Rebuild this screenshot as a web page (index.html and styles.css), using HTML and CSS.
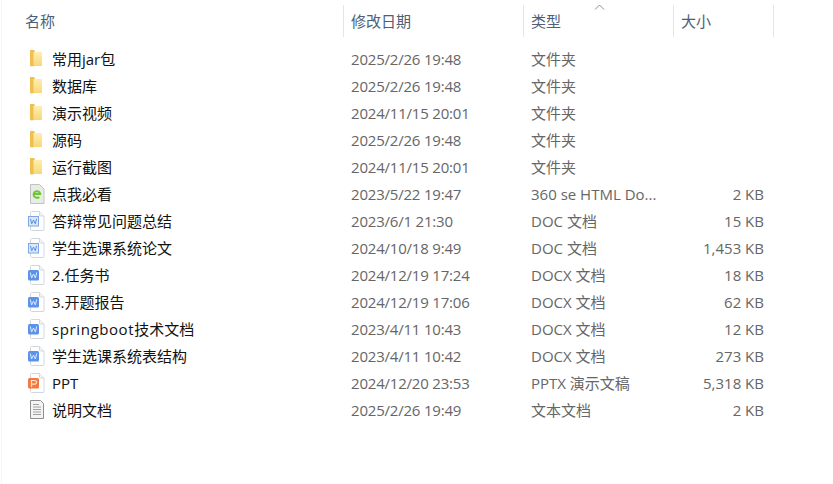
FILE: index.html
```html
<!DOCTYPE html>
<html lang="zh-CN">
<head>
  <meta charset="UTF-8">
  <title>文件列表</title>
  <link rel="stylesheet" href="styles.css">
</head>
<body>
  <svg class="defs" width="0" height="0">
    <defs>
      <linearGradient id="folder-fill" x1="0" y1="0" x2="0" y2="1">
        <stop offset="0" stop-color="#fdeeb0"/>
        <stop offset="1" stop-color="#f8d878"/>
      </linearGradient>
      <symbol id="folder" viewBox="0 0 18 20">
        <path d="M2 1h4l1 1.500v14.500l-4 0.500-1-1z" fill="#efc050"/>
        <path d="M5.500 3h8.500v14H5.500z" fill="url(#folder-fill)"/>
      </symbol>
      <symbol id="page" viewBox="0 0 18 20">
        <path d="M3.500 0.500h8l4.500 4.500v13.500a1 1 0 0 1-1 1h-11.500a1 1 0 0 1-1-1v-17a1 1 0 0 1 1-1z" fill="#fff" stroke="#d3d7dc"/>
        <path d="M11.500 0.500v3.500a1 1 0 0 0 1 1h3.500" fill="#f4f5f7" stroke="#d3d7dc"/>
      </symbol>
      <symbol id="doc-old" viewBox="0 0 18 20">
        <use href="#page" width="18" height="20"/>
        <rect x="0.500" y="5.500" width="10" height="9.500" fill="#dce8fa" stroke="#7aa6ea"/>
        <path d="M2.500 7.800l1.200 5 1.800-3.800 1.800 3.800 1.200-5" fill="none" stroke="#5a8fe0"/>
      </symbol>
      <symbol id="doc-new" viewBox="0 0 18 20">
        <use href="#page" width="18" height="20"/>
        <rect x="0" y="5" width="11" height="10.500" rx="1.500" fill="#5b93ea"/>
        <path d="M2.300 7.500l1.300 5.500 1.900-4 1.900 4 1.300-5.500" fill="none" stroke="#dfeafb"/>
      </symbol>
    </defs>
  </svg>

  <div class="list">
    <div class="header">
      <div class="col col-name">名称</div>
      <div class="col">修改日期</div>
      <div class="col col-type">类型
        <svg class="sort" width="11" height="6" viewBox="0 0 11 6"><path d="M1 5.500l4.500-4.500 4.500 4.500" fill="none" stroke="#8a8f96"/></svg>
      </div>
      <div class="col">大小</div>
    </div>

    <div class="rows">
      <div class="row">
        <div class="name"><svg class="icon"><use href="#folder"/></svg>常用jar包</div>
        <div class="date">2025/2/26 19:48</div><div>文件夹</div><div class="size"></div>
      </div>
      <div class="row">
        <div class="name"><svg class="icon"><use href="#folder"/></svg>数据库</div>
        <div class="date">2025/2/26 19:48</div><div>文件夹</div><div class="size"></div>
      </div>
      <div class="row">
        <div class="name"><svg class="icon"><use href="#folder"/></svg>演示视频</div>
        <div class="date">2024/11/15 20:01</div><div>文件夹</div><div class="size"></div>
      </div>
      <div class="row">
        <div class="name"><svg class="icon"><use href="#folder"/></svg>源码</div>
        <div class="date">2025/2/26 19:48</div><div>文件夹</div><div class="size"></div>
      </div>
      <div class="row">
        <div class="name"><svg class="icon"><use href="#folder"/></svg>运行截图</div>
        <div class="date">2024/11/15 20:01</div><div>文件夹</div><div class="size"></div>
      </div>
      <div class="row">
        <div class="name">
          <svg class="icon" viewBox="0 0 18 20">
            <path d="M2.500 0.500h9l4.500 4.500v14.500h-13.500z" fill="#e9ebe6" stroke="#bfc3be"/>
            <path d="M5.800 10h6.400a3.300 3.300 0 1 0-1 2.900" fill="none" stroke="#6cc832" stroke-width="2"/>
          </svg>点我必看
        </div>
        <div class="date">2023/5/22 19:47</div><div>360 se HTML Do...</div><div class="size">2 KB</div>
      </div>
      <div class="row">
        <div class="name"><svg class="icon"><use href="#doc-old"/></svg>答辩常见问题总结</div>
        <div class="date">2023/6/1 21:30</div><div>DOC 文档</div><div class="size">15 KB</div>
      </div>
      <div class="row">
        <div class="name"><svg class="icon"><use href="#doc-old"/></svg>学生选课系统论文</div>
        <div class="date">2024/10/18 9:49</div><div>DOC 文档</div><div class="size">1,453 KB</div>
      </div>
      <div class="row">
        <div class="name"><svg class="icon"><use href="#doc-new"/></svg>2.任务书</div>
        <div class="date">2024/12/19 17:24</div><div>DOCX 文档</div><div class="size">18 KB</div>
      </div>
      <div class="row">
        <div class="name"><svg class="icon"><use href="#doc-new"/></svg>3.开题报告</div>
        <div class="date">2024/12/19 17:06</div><div>DOCX 文档</div><div class="size">62 KB</div>
      </div>
      <div class="row">
        <div class="name"><svg class="icon"><use href="#doc-new"/></svg><span><span class="wide">springboot</span>技术文档</span></div>
        <div class="date">2023/4/11 10:43</div><div>DOCX 文档</div><div class="size">12 KB</div>
      </div>
      <div class="row">
        <div class="name"><svg class="icon"><use href="#doc-new"/></svg>学生选课系统表结构</div>
        <div class="date">2023/4/11 10:42</div><div>DOCX 文档</div><div class="size">273 KB</div>
      </div>
      <div class="row">
        <div class="name">
          <svg class="icon" viewBox="0 0 18 20"><use href="#page" width="18" height="20"/><rect x="0" y="5" width="11" height="10.500" rx="1.500" fill="#f5793f"/><path d="M3.500 14V7.500h3.200a1.800 1.800 0 0 1 0 3.600H3.500" fill="none" stroke="#fde3d6" stroke-width="1.200"/></svg>PPT
        </div>
        <div class="date">2024/12/20 23:53</div><div>PPTX 演示文稿</div><div class="size">5,318 KB</div>
      </div>
      <div class="row">
        <div class="name">
          <svg class="icon" viewBox="0 0 18 20">
            <path d="M2.500 0.500h10l3 3v15h-13z" fill="#f4f4f4" stroke="#8e8e8e"/>
            <path d="M5 4.500h6M5 7h8M5 9.500h8M5 12h8M5 14.500h8" stroke="#a0a0a0"/>
          </svg>说明文档
        </div>
        <div class="date">2025/2/26 19:49</div><div>文本文档</div><div class="size">2 KB</div>
      </div>
    </div>
  </div>
</body>
</html>
```

FILE: styles.css
```css
html, body {
  height: 100%;
}
body {
  margin: 0;
  background-color: #fff;
  color: #1a1a1a;
  font-family: "Open Sans", "Noto Sans CJK SC", sans-serif;
  font-size: 15px;
  line-height: 20px;
}
.defs {
  display: block;
}
.list {
  box-sizing: border-box;
  height: 484px;
  margin-left: 1px;
  border-left: 1px solid #f5f5f5;
  padding-top: 5px;
}
.header, .row {
  display: grid;
  grid-template-columns: 342px 180px 150px 100px;
}
.header {
  height: 32px;
  color: #4c607a;
}
.col {
  position: relative;
  display: flex;
  align-items: center;
  padding-left: 7px;
  border-right: 1px solid #e5e5e5;
}
.col-name {
  padding-left: 23px;
}
.sort {
  position: absolute;
  left: 70px;
  top: -1px;
}
.rows {
  padding-top: 9px;
}
.row {
  height: 27px;
  align-items: center;
  color: #666;
}
.row > div {
  padding-left: 7px;
  padding-bottom: 1px;
}
.row > .name {
  display: flex;
  align-items: center;
  gap: 6px;
  padding-left: 26px;
  color: #111;
}
.row > .date {
  letter-spacing: -0.2px;
}
.row > .size {
  padding-left: 0;
  padding-right: 10px;
  text-align: right;
}
.wide {
  letter-spacing: 0.6px;
}
.icon {
  width: 18px;
  height: 20px;
  flex: none;
}
```
